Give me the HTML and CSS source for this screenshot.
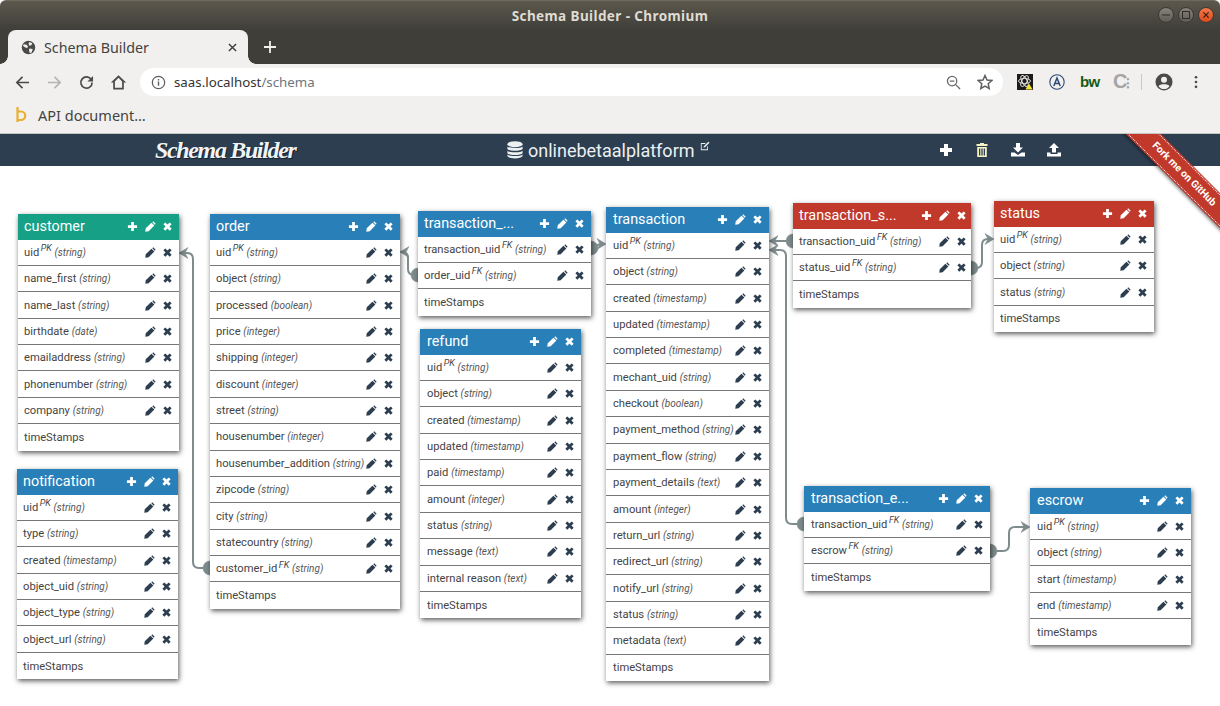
FILE: index.html
```html
<!DOCTYPE html>
<html lang="en">
<head>
    <meta charset="UTF-8">
    <meta name="viewport" content="width=device-width, initial-scale=1.0">
    <title>Schema Builder</title>
    <link rel="stylesheet" href="styles.css">
</head>
<body>
<!-- Shared glyphs for the table and header buttons -->
<svg class="defs" aria-hidden="true">
    <symbol id="i-plus" viewBox="0 0 12 12"><path d="M4.5 1H7.5V4.500H11V7.500H7.5V11H4.500V7.500H1V4.500H4.500Z"/></symbol>
    <symbol id="i-pencil" viewBox="0 0 12 12"><path d="M9 .4L11.600 3 10.600 4 8 1.400ZM7 1.800L10.200 5 4 11.200 .3 11.700 .8 8Z"/></symbol>
    <symbol id="i-remove" viewBox="0 0 12 12"><path d="M3.600 1.500L6 3.900 8.400 1.500 10.500 3.600 8.100 6 10.500 8.400 8.400 10.500 6 8.100 3.600 10.500 1.500 8.400 3.900 6 1.500 3.600Z"/></symbol>
</svg>

<div class="titlebar">
    <span class="titlebar-text">Schema Builder - Chromium</span>
    <div class="window-buttons">
        <span class="win-btn"><svg viewBox="0 0 16 16"><path d="M3.500 8h9" stroke="#2f2e2a" stroke-width="1.200"/></svg></span>
        <span class="win-btn"><svg viewBox="0 0 16 16"><rect x="4" y="4" width="8" height="8" fill="none" stroke="#2f2e2a" stroke-width="1.200"/></svg></span>
        <span class="win-btn win-close"><svg viewBox="0 0 16 16"><path d="M5 5l6 6M11 5l-6 6" stroke="#3a1a0c" stroke-width="1.400"/></svg></span>
    </div>
</div>

<div class="tabstrip">
    <div class="tab">
        <svg class="tab-icon" viewBox="0 0 16 16"><circle cx="8" cy="8" r="7.200" fill="#4a4a4a"/><path d="M3 4.500l3 .5 1.500 2-1 1.500-2-.5-2.500-2ZM9 2l3 1.500-1 2-2 .5-1-2ZM9 9l3.500.5-1 3.500-2 1-1-3Z" fill="#f1f0ee"/></svg>
        <span class="tab-title">Schema Builder</span>
        <svg class="tab-close" viewBox="0 0 10 10"><path d="M1 1l8 8M9 1l-8 8" stroke="#3c3c3c" stroke-width="1.500"/></svg>
    </div>
    <svg class="new-tab" viewBox="0 0 12 12"><path d="M6 0v12M0 6h12" stroke="#f1f0ee" stroke-width="1.800"/></svg>
</div>

<div class="toolbar">
    <svg class="tool" viewBox="0 0 16 16"><path d="M15 8H2M8 2L2 8l6 6" fill="none" stroke="#4a4a4a" stroke-width="1.800"/></svg>
    <svg class="tool" viewBox="0 0 16 16"><path d="M1 8h13M8 2l6 6-6 6" fill="none" stroke="#b3b3b3" stroke-width="1.800"/></svg>
    <svg class="tool" viewBox="0 0 16 16"><path d="M13.200 5A6 6 0 1 0 14 8" fill="none" stroke="#4a4a4a" stroke-width="1.800"/><path d="M15 1v6H9Z" fill="#4a4a4a"/></svg>
    <svg class="tool tool-home" viewBox="0 0 16 16"><path d="M8 1.200L.8 8H3v6.600h10V8h2.200ZM4.600 13V7L8 3.600 11.400 7v6Z" fill="#4a4a4a"/></svg>
    <div class="omnibox">
        <svg class="omni-info" viewBox="0 0 16 16"><circle cx="8" cy="8" r="6.600" fill="none" stroke="#5f5f5f" stroke-width="1.300"/><path d="M8 7v4.500M8 4.300v1.500" stroke="#5f5f5f" stroke-width="1.500"/></svg>
        <span class="url"><span class="url-host">saas.localhost</span>/schema</span>
        <svg class="omni-zoom" viewBox="0 0 16 16"><circle cx="6.500" cy="6.500" r="5" fill="none" stroke="#6b6b6b" stroke-width="1.400"/><path d="M4 6.500h5M10 10l5 5" stroke="#6b6b6b" stroke-width="1.400"/></svg>
        <svg class="omni-star" viewBox="0 0 16 16"><path d="M8 1.500l2 4.500 4.800.5-3.600 3.200 1 4.800L8 12.100 3.800 14.500l1-4.800L1.200 6.500 6 6Z" fill="none" stroke="#5f5f5f" stroke-width="1.500"/></svg>
    </div>
    <div class="extensions">
        <svg class="ext-atom" viewBox="0 0 16 16"><rect width="16" height="16" fill="#1b1b1b"/><g fill="none" stroke="#e8e8e8" stroke-width=".9"><ellipse cx="7.500" cy="7" rx="6" ry="2.500"/><ellipse cx="7.500" cy="7" rx="6" ry="2.500" transform="rotate(60 7.500 7)"/><ellipse cx="7.500" cy="7" rx="6" ry="2.500" transform="rotate(120 7.500 7)"/></g><path d="M12 9.500l3.600 6H8.400Z" fill="#f4e23c"/></svg>
        <svg class="ext-a" viewBox="0 0 16 16"><circle cx="8" cy="8" r="7.200" fill="none" stroke="#2b4a75" stroke-width="1.100"/><path d="M4.800 12L8 4l3.200 8M6 9.500h4" fill="none" stroke="#2b4a75" stroke-width="1.500"/></svg>
        <span class="ext-bw">bw</span>
        <span class="ext-c">C<span class="ext-c-dots">⁝</span></span>
        <span class="ext-sep"></span>
        <svg class="ext-profile" viewBox="0 0 18 18"><circle cx="9" cy="9" r="8.500" fill="#4a4a4a"/><circle cx="9" cy="6.800" r="3" fill="#f1f0ee"/><path d="M3.500 13.200c1.500-2.600 9.500-2.600 11 0-1.500 2-3.500 2.800-5.500 2.800s-4-.8-5.500-2.800Z" fill="#f1f0ee"/></svg>
        <svg class="ext-menu" viewBox="0 0 4 16"><circle cx="2" cy="2.500" r="1.500"/><circle cx="2" cy="8" r="1.500"/><circle cx="2" cy="13.500" r="1.500"/></svg>
    </div>
</div>

<div class="bookmarks">
    <svg class="bm-icon" viewBox="0 0 12 16"><path d="M1.500 0v15M1.500 4.500h3.500a4 4 0 0 1 0 8.500H1.500" fill="none" stroke="#e8b030" stroke-width="2.200"/></svg>
    <span class="bm-text">API document…</span>
</div>

<header class="app-header">
    <div class="brand">Schema Builder</div>
    <div class="dbname">
        <svg class="db-icon" viewBox="0 0 16 18"><g fill="#ecf0f1"><ellipse cx="8" cy="3.200" rx="7.600" ry="3"/><path d="M.4 5.400c1.500 2 13.700 2 15.200 0v2.500c-1.500 2.400-13.700 2.400-15.200 0ZM.4 9.700c1.500 2 13.700 2 15.200 0v2.500c-1.500 2.400-13.700 2.400-15.200 0ZM.4 13.600c1.500 2 13.700 2 15.200 0v1.400c-1.500 3.200-13.700 3.200-15.200 0Z"/></g></svg>
        <span>onlinebetaalplatform</span>
        <svg class="db-edit" viewBox="0 0 12 12"><path d="M1 2.500h6L6 3.500H2v6.500h6.500V7l1-1v5H1Z" fill="#ecf0f1"/><path d="M10 .8l1.400 1.400L6 7.600 4.200 8 4.600 6.200Z" fill="#ecf0f1"/></svg>
    </div>
    <div class="app-actions">
        <svg class="app-action" viewBox="0 0 14 14"><path d="M5 1H9V5H13V9H9V13H5V9H1V5H5Z" fill="#fff"/></svg>
        <svg class="app-action" viewBox="0 0 14 14"><path d="M5 0h4v1h3.500v2h-11V1H5ZM2.200 4h9.600V14H2.200ZM4 5.500v7h1.300v-7ZM6.350 5.500v7h1.300v-7ZM8.700 5.500v7H10v-7Z" fill="#f7f2c4" fill-rule="evenodd"/></svg>
        <svg class="app-action" viewBox="0 0 14 14"><path d="M5 0h4v4.500h3L7 9.500 2 4.500h3ZM0 9.500h3.500L7 12l3.500-2.500H14V13.500H0Z" fill="#fff"/></svg>
        <svg class="app-action" viewBox="0 0 14 14"><path d="M7 0l5 5H9v4.500H5V5H2ZM0 9.500h3.500v1.500h7V9.500H14V13.500H0Z" fill="#fff"/></svg>
    </div>
</header>

<div class="ribbon-clip"><a class="ribbon">Fork me on GitHub</a></div>

<main class="canvas">
    <!-- Relations between the tables, drawn under them -->
    <svg class="links" viewBox="0 166 1220 540">
        <g class="link-lines">
            <path d="M210 568H199Q193 568 193 562V259Q193 253 187 253H182"/>
            <path d="M418 275H414Q408 275 408 269V258Q408 252 402 252"/>
            <path d="M591 248C597 248 596 244 601 244H604"/>
            <path d="M793 241H773"/>
            <path d="M804 524H792Q786 524 786 518V256Q786 250 780 250H773"/>
            <path d="M971 268H976Q982 268 982 262V245Q982 239 988 239H992"/>
            <path d="M990 551H1003Q1009 551 1009 545V533Q1009 527 1015 527H1028"/>
        </g>
        <g class="link-ends">
            <circle cx="210" cy="568" r="7"/>
            <circle cx="418" cy="275" r="7"/>
            <circle cx="591" cy="248" r="7"/>
            <circle cx="793" cy="241" r="7"/>
            <circle cx="804" cy="524" r="7"/>
            <circle cx="971" cy="268" r="7"/>
            <circle cx="990" cy="551" r="7"/>
            <path d="M179 253l9-5.500-3 5.500 3 5.500z"/>
            <path d="M400 252l9-5.500-3 5.500 3 5.500z"/>
            <path d="M606 244l-9-5.500 3 5.500-3 5.500z"/>
            <path d="M769 241l9-5.500-3 5.500 3 5.500z"/>
            <path d="M769 250l9-5.500-3 5.500 3 5.500z"/>
            <path d="M994 239l-9-5.500 3 5.500-3 5.500z"/>
            <path d="M1030 527l-9-5.500 3 5.500-3 5.500z"/>
        </g>
    </svg>

    <section class="table green t-customer">
        <div class="table-head"><span class="table-name">customer</span><svg class="ic"><use href="#i-plus"/></svg><svg class="ic"><use href="#i-pencil"/></svg><svg class="ic"><use href="#i-remove"/></svg></div>
        <div class="row"><span class="col">uid<sup>PK</sup> <em>(string)</em></span><svg class="ic"><use href="#i-pencil"/></svg><svg class="ic"><use href="#i-remove"/></svg></div>
        <div class="row"><span class="col">name_first <em>(string)</em></span><svg class="ic"><use href="#i-pencil"/></svg><svg class="ic"><use href="#i-remove"/></svg></div>
        <div class="row"><span class="col">name_last <em>(string)</em></span><svg class="ic"><use href="#i-pencil"/></svg><svg class="ic"><use href="#i-remove"/></svg></div>
        <div class="row"><span class="col">birthdate <em>(date)</em></span><svg class="ic"><use href="#i-pencil"/></svg><svg class="ic"><use href="#i-remove"/></svg></div>
        <div class="row"><span class="col">emailaddress <em>(string)</em></span><svg class="ic"><use href="#i-pencil"/></svg><svg class="ic"><use href="#i-remove"/></svg></div>
        <div class="row"><span class="col">phonenumber <em>(string)</em></span><svg class="ic"><use href="#i-pencil"/></svg><svg class="ic"><use href="#i-remove"/></svg></div>
        <div class="row"><span class="col">company <em>(string)</em></span><svg class="ic"><use href="#i-pencil"/></svg><svg class="ic"><use href="#i-remove"/></svg></div>
        <div class="row"><span class="col">timeStamps</span></div>
    </section>

    <section class="table blue t-notification">
        <div class="table-head"><span class="table-name">notification</span><svg class="ic"><use href="#i-plus"/></svg><svg class="ic"><use href="#i-pencil"/></svg><svg class="ic"><use href="#i-remove"/></svg></div>
        <div class="row"><span class="col">uid<sup>PK</sup> <em>(string)</em></span><svg class="ic"><use href="#i-pencil"/></svg><svg class="ic"><use href="#i-remove"/></svg></div>
        <div class="row"><span class="col">type <em>(string)</em></span><svg class="ic"><use href="#i-pencil"/></svg><svg class="ic"><use href="#i-remove"/></svg></div>
        <div class="row"><span class="col">created <em>(timestamp)</em></span><svg class="ic"><use href="#i-pencil"/></svg><svg class="ic"><use href="#i-remove"/></svg></div>
        <div class="row"><span class="col">object_uid <em>(string)</em></span><svg class="ic"><use href="#i-pencil"/></svg><svg class="ic"><use href="#i-remove"/></svg></div>
        <div class="row"><span class="col">object_type <em>(string)</em></span><svg class="ic"><use href="#i-pencil"/></svg><svg class="ic"><use href="#i-remove"/></svg></div>
        <div class="row"><span class="col">object_url <em>(string)</em></span><svg class="ic"><use href="#i-pencil"/></svg><svg class="ic"><use href="#i-remove"/></svg></div>
        <div class="row"><span class="col">timeStamps</span></div>
    </section>

    <section class="table blue t-order">
        <div class="table-head"><span class="table-name">order</span><svg class="ic"><use href="#i-plus"/></svg><svg class="ic"><use href="#i-pencil"/></svg><svg class="ic"><use href="#i-remove"/></svg></div>
        <div class="row"><span class="col">uid<sup>PK</sup> <em>(string)</em></span><svg class="ic"><use href="#i-pencil"/></svg><svg class="ic"><use href="#i-remove"/></svg></div>
        <div class="row"><span class="col">object <em>(string)</em></span><svg class="ic"><use href="#i-pencil"/></svg><svg class="ic"><use href="#i-remove"/></svg></div>
        <div class="row"><span class="col">processed <em>(boolean)</em></span><svg class="ic"><use href="#i-pencil"/></svg><svg class="ic"><use href="#i-remove"/></svg></div>
        <div class="row"><span class="col">price <em>(integer)</em></span><svg class="ic"><use href="#i-pencil"/></svg><svg class="ic"><use href="#i-remove"/></svg></div>
        <div class="row"><span class="col">shipping <em>(integer)</em></span><svg class="ic"><use href="#i-pencil"/></svg><svg class="ic"><use href="#i-remove"/></svg></div>
        <div class="row"><span class="col">discount <em>(integer)</em></span><svg class="ic"><use href="#i-pencil"/></svg><svg class="ic"><use href="#i-remove"/></svg></div>
        <div class="row"><span class="col">street <em>(string)</em></span><svg class="ic"><use href="#i-pencil"/></svg><svg class="ic"><use href="#i-remove"/></svg></div>
        <div class="row"><span class="col">housenumber <em>(integer)</em></span><svg class="ic"><use href="#i-pencil"/></svg><svg class="ic"><use href="#i-remove"/></svg></div>
        <div class="row"><span class="col">housenumber_addition <em>(string)</em></span><svg class="ic"><use href="#i-pencil"/></svg><svg class="ic"><use href="#i-remove"/></svg></div>
        <div class="row"><span class="col">zipcode <em>(string)</em></span><svg class="ic"><use href="#i-pencil"/></svg><svg class="ic"><use href="#i-remove"/></svg></div>
        <div class="row"><span class="col">city <em>(string)</em></span><svg class="ic"><use href="#i-pencil"/></svg><svg class="ic"><use href="#i-remove"/></svg></div>
        <div class="row"><span class="col">statecountry <em>(string)</em></span><svg class="ic"><use href="#i-pencil"/></svg><svg class="ic"><use href="#i-remove"/></svg></div>
        <div class="row"><span class="col">customer_id<sup>FK</sup> <em>(string)</em></span><svg class="ic"><use href="#i-pencil"/></svg><svg class="ic"><use href="#i-remove"/></svg></div>
        <div class="row"><span class="col">timeStamps</span></div>
    </section>

    <section class="table blue t-tx-order">
        <div class="table-head"><span class="table-name">transaction_...</span><svg class="ic"><use href="#i-plus"/></svg><svg class="ic"><use href="#i-pencil"/></svg><svg class="ic"><use href="#i-remove"/></svg></div>
        <div class="row"><span class="col">transaction_uid<sup>FK</sup> <em>(string)</em></span><svg class="ic"><use href="#i-pencil"/></svg><svg class="ic"><use href="#i-remove"/></svg></div>
        <div class="row"><span class="col">order_uid<sup>FK</sup> <em>(string)</em></span><svg class="ic"><use href="#i-pencil"/></svg><svg class="ic"><use href="#i-remove"/></svg></div>
        <div class="row"><span class="col">timeStamps</span></div>
    </section>

    <section class="table blue t-refund">
        <div class="table-head"><span class="table-name">refund</span><svg class="ic"><use href="#i-plus"/></svg><svg class="ic"><use href="#i-pencil"/></svg><svg class="ic"><use href="#i-remove"/></svg></div>
        <div class="row"><span class="col">uid<sup>PK</sup> <em>(string)</em></span><svg class="ic"><use href="#i-pencil"/></svg><svg class="ic"><use href="#i-remove"/></svg></div>
        <div class="row"><span class="col">object <em>(string)</em></span><svg class="ic"><use href="#i-pencil"/></svg><svg class="ic"><use href="#i-remove"/></svg></div>
        <div class="row"><span class="col">created <em>(timestamp)</em></span><svg class="ic"><use href="#i-pencil"/></svg><svg class="ic"><use href="#i-remove"/></svg></div>
        <div class="row"><span class="col">updated <em>(timestamp)</em></span><svg class="ic"><use href="#i-pencil"/></svg><svg class="ic"><use href="#i-remove"/></svg></div>
        <div class="row"><span class="col">paid <em>(timestamp)</em></span><svg class="ic"><use href="#i-pencil"/></svg><svg class="ic"><use href="#i-remove"/></svg></div>
        <div class="row"><span class="col">amount <em>(integer)</em></span><svg class="ic"><use href="#i-pencil"/></svg><svg class="ic"><use href="#i-remove"/></svg></div>
        <div class="row"><span class="col">status <em>(string)</em></span><svg class="ic"><use href="#i-pencil"/></svg><svg class="ic"><use href="#i-remove"/></svg></div>
        <div class="row"><span class="col">message <em>(text)</em></span><svg class="ic"><use href="#i-pencil"/></svg><svg class="ic"><use href="#i-remove"/></svg></div>
        <div class="row"><span class="col">internal reason <em>(text)</em></span><svg class="ic"><use href="#i-pencil"/></svg><svg class="ic"><use href="#i-remove"/></svg></div>
        <div class="row"><span class="col">timeStamps</span></div>
    </section>

    <section class="table blue t-transaction">
        <div class="table-head"><span class="table-name">transaction</span><svg class="ic"><use href="#i-plus"/></svg><svg class="ic"><use href="#i-pencil"/></svg><svg class="ic"><use href="#i-remove"/></svg></div>
        <div class="row"><span class="col">uid<sup>PK</sup> <em>(string)</em></span><svg class="ic"><use href="#i-pencil"/></svg><svg class="ic"><use href="#i-remove"/></svg></div>
        <div class="row"><span class="col">object <em>(string)</em></span><svg class="ic"><use href="#i-pencil"/></svg><svg class="ic"><use href="#i-remove"/></svg></div>
        <div class="row"><span class="col">created <em>(timestamp)</em></span><svg class="ic"><use href="#i-pencil"/></svg><svg class="ic"><use href="#i-remove"/></svg></div>
        <div class="row"><span class="col">updated <em>(timestamp)</em></span><svg class="ic"><use href="#i-pencil"/></svg><svg class="ic"><use href="#i-remove"/></svg></div>
        <div class="row"><span class="col">completed <em>(timestamp)</em></span><svg class="ic"><use href="#i-pencil"/></svg><svg class="ic"><use href="#i-remove"/></svg></div>
        <div class="row"><span class="col">mechant_uid <em>(string)</em></span><svg class="ic"><use href="#i-pencil"/></svg><svg class="ic"><use href="#i-remove"/></svg></div>
        <div class="row"><span class="col">checkout <em>(boolean)</em></span><svg class="ic"><use href="#i-pencil"/></svg><svg class="ic"><use href="#i-remove"/></svg></div>
        <div class="row"><span class="col">payment_method <em>(string)</em></span><svg class="ic"><use href="#i-pencil"/></svg><svg class="ic"><use href="#i-remove"/></svg></div>
        <div class="row"><span class="col">payment_flow <em>(string)</em></span><svg class="ic"><use href="#i-pencil"/></svg><svg class="ic"><use href="#i-remove"/></svg></div>
        <div class="row"><span class="col">payment_details <em>(text)</em></span><svg class="ic"><use href="#i-pencil"/></svg><svg class="ic"><use href="#i-remove"/></svg></div>
        <div class="row"><span class="col">amount <em>(integer)</em></span><svg class="ic"><use href="#i-pencil"/></svg><svg class="ic"><use href="#i-remove"/></svg></div>
        <div class="row"><span class="col">return_url <em>(string)</em></span><svg class="ic"><use href="#i-pencil"/></svg><svg class="ic"><use href="#i-remove"/></svg></div>
        <div class="row"><span class="col">redirect_url <em>(string)</em></span><svg class="ic"><use href="#i-pencil"/></svg><svg class="ic"><use href="#i-remove"/></svg></div>
        <div class="row"><span class="col">notify_url <em>(string)</em></span><svg class="ic"><use href="#i-pencil"/></svg><svg class="ic"><use href="#i-remove"/></svg></div>
        <div class="row"><span class="col">status <em>(string)</em></span><svg class="ic"><use href="#i-pencil"/></svg><svg class="ic"><use href="#i-remove"/></svg></div>
        <div class="row"><span class="col">metadata <em>(text)</em></span><svg class="ic"><use href="#i-pencil"/></svg><svg class="ic"><use href="#i-remove"/></svg></div>
        <div class="row"><span class="col">timeStamps</span></div>
    </section>

    <section class="table red t-tx-status">
        <div class="table-head"><span class="table-name">transaction_s...</span><svg class="ic"><use href="#i-plus"/></svg><svg class="ic"><use href="#i-pencil"/></svg><svg class="ic"><use href="#i-remove"/></svg></div>
        <div class="row"><span class="col">transaction_uid<sup>FK</sup> <em>(string)</em></span><svg class="ic"><use href="#i-pencil"/></svg><svg class="ic"><use href="#i-remove"/></svg></div>
        <div class="row"><span class="col">status_uid<sup>FK</sup> <em>(string)</em></span><svg class="ic"><use href="#i-pencil"/></svg><svg class="ic"><use href="#i-remove"/></svg></div>
        <div class="row"><span class="col">timeStamps</span></div>
    </section>

    <section class="table red t-status">
        <div class="table-head"><span class="table-name">status</span><svg class="ic"><use href="#i-plus"/></svg><svg class="ic"><use href="#i-pencil"/></svg><svg class="ic"><use href="#i-remove"/></svg></div>
        <div class="row"><span class="col">uid<sup>PK</sup> <em>(string)</em></span><svg class="ic"><use href="#i-pencil"/></svg><svg class="ic"><use href="#i-remove"/></svg></div>
        <div class="row"><span class="col">object <em>(string)</em></span><svg class="ic"><use href="#i-pencil"/></svg><svg class="ic"><use href="#i-remove"/></svg></div>
        <div class="row"><span class="col">status <em>(string)</em></span><svg class="ic"><use href="#i-pencil"/></svg><svg class="ic"><use href="#i-remove"/></svg></div>
        <div class="row"><span class="col">timeStamps</span></div>
    </section>

    <section class="table blue t-tx-escrow">
        <div class="table-head"><span class="table-name">transaction_e...</span><svg class="ic"><use href="#i-plus"/></svg><svg class="ic"><use href="#i-pencil"/></svg><svg class="ic"><use href="#i-remove"/></svg></div>
        <div class="row"><span class="col">transaction_uid<sup>FK</sup> <em>(string)</em></span><svg class="ic"><use href="#i-pencil"/></svg><svg class="ic"><use href="#i-remove"/></svg></div>
        <div class="row"><span class="col">escrow<sup>FK</sup> <em>(string)</em></span><svg class="ic"><use href="#i-pencil"/></svg><svg class="ic"><use href="#i-remove"/></svg></div>
        <div class="row"><span class="col">timeStamps</span></div>
    </section>

    <section class="table blue t-escrow">
        <div class="table-head"><span class="table-name">escrow</span><svg class="ic"><use href="#i-plus"/></svg><svg class="ic"><use href="#i-pencil"/></svg><svg class="ic"><use href="#i-remove"/></svg></div>
        <div class="row"><span class="col">uid<sup>PK</sup> <em>(string)</em></span><svg class="ic"><use href="#i-pencil"/></svg><svg class="ic"><use href="#i-remove"/></svg></div>
        <div class="row"><span class="col">object <em>(string)</em></span><svg class="ic"><use href="#i-pencil"/></svg><svg class="ic"><use href="#i-remove"/></svg></div>
        <div class="row"><span class="col">start <em>(timestamp)</em></span><svg class="ic"><use href="#i-pencil"/></svg><svg class="ic"><use href="#i-remove"/></svg></div>
        <div class="row"><span class="col">end <em>(timestamp)</em></span><svg class="ic"><use href="#i-pencil"/></svg><svg class="ic"><use href="#i-remove"/></svg></div>
        <div class="row"><span class="col">timeStamps</span></div>
    </section>
</main>
</body>
</html>
```
FILE: styles.css
```css
* {
    box-sizing: border-box;
}
html, body {
    margin: 0;
    height: 706px;
    overflow: hidden;
}
body {
    display: flex;
    flex-direction: column;
    position: relative;
    background: #fff;
    font-family: Roboto, sans-serif;
}
.defs {
    position: absolute;
    width: 0;
    height: 0;
}

/* Browser window */
.titlebar {
    height: 30px;
    flex: none;
    display: flex;
    align-items: center;
    justify-content: center;
    position: relative;
    background: linear-gradient(#5c584d, #45433d 80%, #403e39);
    border-top: 1px solid #6d695c;
    border-radius: 6px 6px 0 0;
}
.titlebar-text {
    font: bold 13.5px "Noto Sans", sans-serif;
    letter-spacing: .4px;
    color: #dfdbd2;
}
.window-buttons {
    position: absolute;
    right: 6px;
    top: 6px;
    display: flex;
    gap: 4px;
}
.win-btn {
    width: 16px;
    height: 16px;
    border-radius: 50%;
    background: linear-gradient(#87837a, #5f5c54);
    border: 1px solid #3a3833;
    display: block;
}
.win-btn svg {
    display: block;
    width: 14px;
    height: 14px;
}
.win-close {
    background: linear-gradient(#f2794a, #dd4a1c);
}
.tabstrip {
    height: 34px;
    flex: none;
    display: flex;
    align-items: center;
    background: #403e39;
    padding-left: 8px;
}
.tab {
    width: 240px;
    height: 34px;
    align-self: flex-end;
    display: flex;
    align-items: center;
    position: relative;
    padding: 0 11px 0 13px;
    background: #f1f0ee;
    border-radius: 8px 8px 0 0;
}
.tab::before, .tab::after {
    content: "";
    position: absolute;
    bottom: 0;
    width: 8px;
    height: 8px;
}
.tab::before {
    left: -8px;
    background: radial-gradient(circle at 0 0, #403e39 7.5px, #f1f0ee 8px);
}
.tab::after {
    right: -8px;
    background: radial-gradient(circle at 100% 0, #403e39 7.5px, #f1f0ee 8px);
}
.tab-icon {
    width: 15px;
    height: 15px;
}
.tab-title {
    flex: 1;
    margin-left: 8px;
    font: 14.3px "Noto Sans", sans-serif;
    color: #45433f;
}
.tab-close {
    width: 9px;
    height: 9px;
}
.new-tab {
    width: 12px;
    height: 12px;
    margin-left: 16px;
}
.toolbar {
    height: 36px;
    flex: none;
    display: flex;
    align-items: center;
    background: #f1f0ee;
    padding-left: 15px;
}
.tool {
    width: 15px;
    height: 15px;
    margin-right: 17px;
}
.tool-home {
    width: 17px;
    height: 17px;
    margin: 0 14px 0 -1px;
}
.omnibox {
    width: 863px;
    height: 28px;
    margin-left: -1px;
    display: flex;
    align-items: center;
    background: #fff;
    border-radius: 14px;
    padding: 0 10px 0 11px;
}
.omni-info {
    width: 15px;
    height: 15px;
}
.url {
    flex: 1;
    margin-left: 8px;
    font: 13.3px "Noto Sans", sans-serif;
    color: #6b7680;
}
.url-host {
    color: #333;
}
.omni-zoom {
    width: 15px;
    height: 15px;
    margin-right: 16px;
}
.omni-star {
    width: 16px;
    height: 16px;
}
.extensions {
    flex: 1;
    display: flex;
    align-items: center;
    padding-left: 14px;
}
.ext-atom {
    width: 16px;
    height: 16px;
    margin-right: 16px;
}
.ext-a {
    width: 16px;
    height: 16px;
    margin-right: 15px;
}
.ext-bw {
    width: 17px;
    font: bold 15px/16px "Liberation Sans", sans-serif;
    letter-spacing: -.6px;
    color: #155a14;
    margin-right: 16px;
}
.ext-c {
    width: 16px;
    font: bold 20px/18px "Liberation Sans", sans-serif;
    letter-spacing: -1px;
    color: #a5a5a5;
    white-space: nowrap;
}
.ext-c-dots {
    font-size: 14px;
}
.ext-sep {
    width: 1px;
    height: 16px;
    background: #c9c9c9;
    margin: 0 13px 0 12px;
}
.ext-profile {
    width: 18px;
    height: 18px;
    margin-right: 21px;
}
.ext-menu {
    width: 4px;
    height: 14px;
    fill: #4a4a4a;
}
.bookmarks {
    height: 33px;
    flex: none;
    display: flex;
    align-items: center;
    background: #f1f0ee;
    padding-left: 16px;
    padding-bottom: 3px;
}
.bm-icon {
    width: 12px;
    height: 16px;
}
.bm-text {
    margin-left: 10px;
    font: 14.5px "Noto Sans", sans-serif;
    color: #45433f;
}

/* App header */
.app-header {
    height: 33px;
    flex: none;
    display: flex;
    align-items: center;
    background: #2c3e50;
    border-top: 1px solid #c4c4c4;
    padding-left: 155px;
    color: #ecf0f1;
}
.brand {
    width: 352px;
    font: italic bold 24px "Liberation Serif", serif;
    letter-spacing: -1.35px;
    color: #f0f4f6;
    text-shadow: 1px 1px 0 #16212c;
}
.dbname {
    width: 432px;
    display: flex;
    align-items: center;
    font-size: 18px;
    color: #ecf0f1;
}
.db-icon {
    width: 16px;
    height: 18px;
    margin-right: 5px;
}
.db-edit {
    width: 10px;
    height: 10px;
    margin: -8px 0 0 5px;
}
.app-actions {
    display: flex;
    gap: 22px;
}
.app-action {
    width: 14px;
    height: 14px;
}

/* Fork ribbon */
.ribbon-clip {
    position: absolute;
    top: 134px;
    right: 0;
    width: 150px;
    height: 150px;
    overflow: hidden;
    z-index: 5;
}
.ribbon {
    position: absolute;
    left: 4px;
    top: 29px;
    width: 220px;
    height: 22.6px;
    transform: rotate(45deg);
    background: #c0392b;
    box-shadow: 0 2px 4px rgba(0, 0, 0, .6);
    border-top: 1px dotted #fff;
    border-bottom: 1px dotted #fff;
    outline: 1px solid #c0392b;
    text-align: center;
    font: bold 10.2px/20px Roboto, sans-serif;
    color: #fff;
}

/* Schema canvas */
.canvas {
    flex: 1;
    position: relative;
}
.links {
    position: absolute;
    left: 0;
    top: 0;
    width: 1220px;
    height: 540px;
}
.link-lines path {
    fill: none;
    stroke: #7f8c8d;
    stroke-width: 2;
}
.link-ends circle, .link-ends path {
    fill: #7f8c8d;
    stroke: #7f8c8d;
    stroke-width: .5;
    stroke-linejoin: round;
}
.table {
    position: absolute;
    background: #fff;
    box-shadow: 1px 2px 5px rgba(0, 0, 0, .65);
}
.table-head {
    height: 25.6px;
    display: flex;
    align-items: center;
    gap: 6.5px;
    padding: 0 6px;
    color: #fff;
}
.table-name {
    flex: 1;
    font-size: 14.4px;
    white-space: nowrap;
}
.green .table-head {
    background: #16a085;
}
.blue .table-head {
    background: #2980b9;
}
.red .table-head {
    background: #c0392b;
}
.ic {
    width: 11px;
    height: 11px;
    flex: none;
    fill: currentColor;
}
.row {
    height: 26.375px;
    display: flex;
    align-items: center;
    gap: 6.5px;
    padding: 0 6px;
    border-bottom: 1px solid #777;
    color: #2c3e50;
}
.row:last-child {
    border-bottom: 0;
}
.col {
    flex: 1;
    min-width: 0;
    font-size: 11.2px;
    color: #444;
    white-space: nowrap;
}
.col em {
    font-size: 10px;
    color: #555;
}
.col sup {
    font-size: 9px;
    font-style: italic;
    line-height: 0;
    margin-left: 1.5px;
}

/* Where each table sits on the canvas */
.t-customer { left: 18px; top: 48px; width: 161px; }
.t-notification { left: 17px; top: 303px; width: 161px; }
.t-order { left: 210px; top: 48px; width: 190px; }
.t-tx-order { left: 418px; top: 45px; width: 173px; }
.t-refund { left: 420px; top: 163px; width: 161px; }
.t-transaction { left: 606px; top: 41px; width: 163px; }
.t-tx-status { left: 793px; top: 37px; width: 178px; }
.t-status { left: 994px; top: 35px; width: 160px; }
.t-tx-escrow { left: 804px; top: 320px; width: 186px; }
.t-escrow { left: 1030px; top: 322px; width: 161px; }
.t-tx-status .table-head, .t-tx-status .row { padding-right: 4px; }
.t-refund .table-head, .t-refund .row,
.t-transaction .table-head, .t-transaction .row,
.t-tx-escrow .table-head, .t-tx-escrow .row,
.t-escrow .table-head, .t-escrow .row { padding-left: 7px; }
```
